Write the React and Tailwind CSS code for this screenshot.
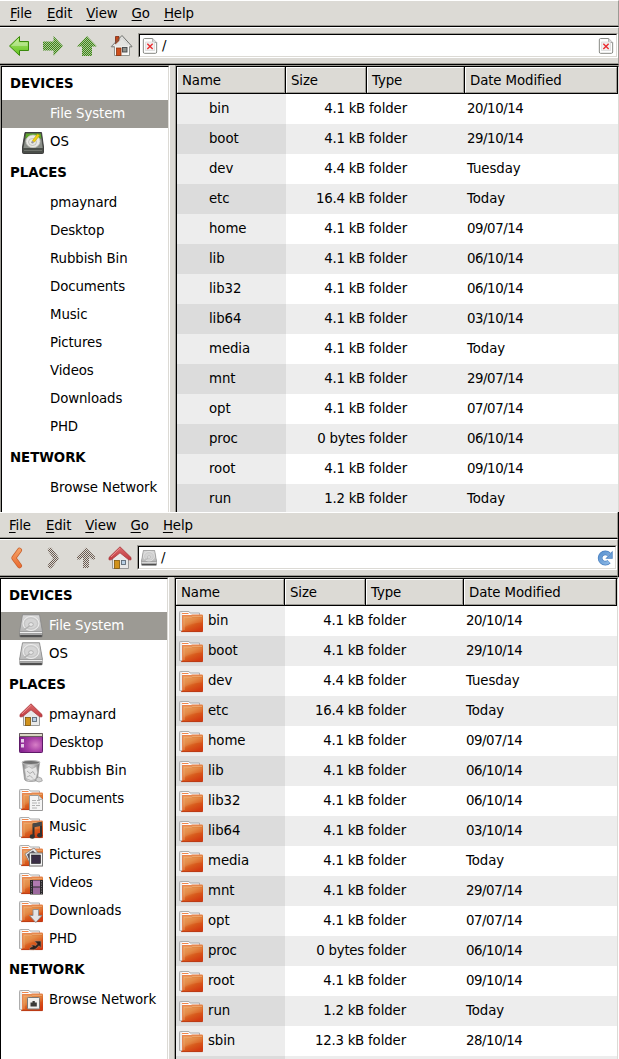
const ROWS = [
  ['bin', '4.1 kB', '20/10/14'], ['boot', '4.1 kB', '29/10/14'], ['dev', '4.4 kB', 'Tuesday'],
  ['etc', '16.4 kB', 'Today'], ['home', '4.1 kB', '09/07/14'], ['lib', '4.1 kB', '06/10/14'],
  ['lib32', '4.1 kB', '06/10/14'], ['lib64', '4.1 kB', '03/10/14'], ['media', '4.1 kB', 'Today'],
  ['mnt', '4.1 kB', '29/07/14'], ['opt', '4.1 kB', '07/07/14'], ['proc', '0 bytes', '06/10/14'],
  ['root', '4.1 kB', '09/10/14'], ['run', '1.2 kB', 'Today'], ['sbin', '12.3 kB', '28/10/14'],
];

function Defs() {
  return (
    <svg className="absolute size-0" aria-hidden="true">
      <defs>
        <linearGradient id="folder" x1="0" y1="0" x2=".6" y2="1">
          <stop offset="0" stopColor="#eda060" /><stop offset=".45" stopColor="#e08440" /><stop offset=".7" stopColor="#d85a1c" /><stop offset="1" stopColor="#d23c12" />
        </linearGradient>
        <linearGradient id="tab" x1="0" y1="0" x2="1" y2="0">
          <stop offset="0" stopColor="#d8d8d8" /><stop offset=".2" stopColor="#fff" /><stop offset="1" stopColor="#f2f2f2" />
        </linearGradient>
        <linearGradient id="drive" x1="0" y1="0" x2="0" y2="1">
          <stop offset="0" stopColor="#dadada" /><stop offset="1" stopColor="#b8b8b8" />
        </linearGradient>
        <linearGradient id="roof" x1="0" y1="0" x2="0" y2="1">
          <stop offset="0" stopColor="#db6a6c" /><stop offset="1" stopColor="#c23a40" />
        </linearGradient>
        <linearGradient id="green" x1="0" y1="0" x2="0" y2="1">
          <stop offset="0" stopColor="#b5e87a" /><stop offset="1" stopColor="#5fc11c" />
        </linearGradient>
        <linearGradient id="orange" x1="0" y1="0" x2="0" y2="24" gradientUnits="userSpaceOnUse">
          <stop offset="0" stopColor="#f7a96c" /><stop offset="1" stopColor="#e8642a" />
        </linearGradient>
        <radialGradient id="purple" cx=".7" cy=".6" r=".8">
          <stop offset="0" stopColor="#d77fc6" /><stop offset=".45" stopColor="#a83fa6" /><stop offset="1" stopColor="#7c1c8a" />
        </radialGradient>
        <linearGradient id="bin" x1="0" y1="0" x2="1" y2="0">
          <stop offset="0" stopColor="#7c7c7c" /><stop offset=".35" stopColor="#dcdcdc" /><stop offset=".65" stopColor="#c4c4c4" /><stop offset="1" stopColor="#7a7a7a" />
        </linearGradient>
        <linearGradient id="blue" x1="0" y1="0" x2="1" y2="1">
          <stop offset="0" stopColor="#5b93d0" /><stop offset="1" stopColor="#8ab6e4" />
        </linearGradient>
        <pattern id="ditherGreen" width="2" height="2" patternUnits="userSpaceOnUse">
          <rect width="2" height="2" fill="#a9c795" /><rect width="1" height="1" fill="#3f8418" /><rect x="1" y="1" width="1" height="1" fill="#3f8418" />
        </pattern>
        <pattern id="ditherGray" width="2" height="2" patternUnits="userSpaceOnUse">
          <rect width="1" height="1" fill="#6b5a50" /><rect x="1" y="1" width="1" height="1" fill="#6b5a50" />
        </pattern>
      </defs>
    </svg>
  );
}

function Svg({ children, size = 'size-6' }) {
  return <svg viewBox="0 0 24 24" className={`block shrink-0 ${size}`}>{children}</svg>;
}

function FolderBase() {
  return (
    <>
      <path d="M.5 21.500V3.300q0-.8.8-.8h8.700l1 1.500h9.500v17.500z" fill="url(#tab)" stroke="#adadad" />
      <path d="M3 4.500h6.500" stroke="#f0874c" />
      <path d="M2 5.500v16" stroke="#ededed" />
      <path d="M3 6H23.500q.5 0 .5.500V22q0 1-1 1H2q1-.3 1-1.500z" fill="url(#folder)" />
      <path d="M3.500 21.500V6.500H12l1-.5H23.500" fill="none" stroke="#e88450" />
      <path d="M5 21V8.300h7.500l1-.8H23" fill="none" stroke="#f0b684" strokeWidth=".6" />
      <path d="M5.500 9H23v4.500C16 14 9 15.500 5.500 18.500z" fill="#ffc880" opacity=".13" />
      <path d="M2 22.600h21.500" stroke="#b23a16" strokeWidth=".8" fill="none" />
    </>
  );
}

function Overlay({ kind }) {
  if (kind === 'documents') return (
    <>
      <path d="M10.500 8.500h9l4 4v11h-13z" fill="#f4f4f4" stroke="#999" />
      <path d="M19.500 8.500v4h4" fill="#ddd" stroke="#aaa" strokeWidth=".8" />
      <path d="M13 13.500h4m1 0h3M13 16h5m1 0h2M13 18.500h3m1 0h4M13 21h5" stroke="#aaa" strokeWidth=".9" />
    </>
  );
  if (kind === 'music') return (
    <>
      <path d="M14.500 21V9.500L22 8v12" fill="none" stroke="#303030" strokeWidth="2" />
      <path d="M14 8.500 23 7v3.800L14 12.500z" fill="#484848" />
      <ellipse cx="13.300" cy="21.500" rx="2.600" ry="2.200" fill="#333" /><ellipse cx="20.700" cy="20.300" rx="2.600" ry="2.200" fill="#333" />
    </>
  );
  if (kind === 'pictures') return (
    <>
      <path d="m6 11 9-6 5 6-9 9z" fill="#eee" stroke="#777" strokeWidth=".7" />
      <path d="m8 11.500 6-4 3 3-7 6z" fill="#55505c" />
      <rect x="10.500" y="10" width="13" height="13" fill="#f4f4f4" stroke="#777" />
      <rect x="12.500" y="12" width="9" height="8.500" fill="#3a2d45" stroke="#222" strokeWidth=".6" />
    </>
  );
  if (kind === 'videos') return (
    <>
      <rect x="11" y="9" width="13" height="14.500" fill="#2b282b" />
      <rect x="14" y="9.500" width="7" height="6" fill="#b07ab0" /><rect x="14" y="16.500" width="7" height="6.500" fill="#9c6a9e" />
      <path d="M12.500 10v13M22.500 10v13" stroke="#8a868a" strokeWidth=".8" strokeDasharray="1.200 1.200" />
    </>
  );
  if (kind === 'downloads') return (
    <path d="M14 10.500h5.500v6h3.500l-6.200 7-6.300-7H14z" fill="#e4e4e4" stroke="#8c8c8c" strokeWidth=".9" />
  );
  if (kind === 'link') return (
    <path d="M10.500 22.500c0-2 1-2.500 3-2.700l-1.500-1.500 3-.3 1.500.8 1.800-1.800L15.500 14H22v6.700l-2-2-3.200 3.300q-1.500 1.200-6.300.5z" fill="#2b211d" stroke="#c08a6c" strokeWidth=".6" />
  );
  if (kind === 'network') return (
    <>
      <rect x="8.500" y="9.500" width="12" height="11.500" rx=".8" fill="#f0f0ee" stroke="#777" />
      <path d="M11.500 18.500v-4h2v-1.500h2.300v1.500h2v4z" fill="#3a3a38" />
    </>
  );
  return null;
}

function Folder({ kind }) {
  return <Svg><FolderBase /><Overlay kind={kind} /></Svg>;
}

function Drive({ size }) {
  return (
    <Svg size={size}>
      <path d="M3.500.8h17l3 17.200v4q0 1.300-1.200 1.300H1.700Q.5 23.300.5 22v-4z" fill="#666" />
      <path d="M3.500.8h17l3 16.700H.5z" fill="url(#drive)" stroke="#8c8c8c" strokeWidth=".8" />
      <path d="M.8 17.800h22.400v1.500H.8z" fill="#f0f0f0" />
      <path d="M.8 19.300h22.400v1.700H.8z" fill="#a8a8a8" />
      <path d="M1.500 22h21" stroke="#4a4a4a" strokeWidth="1.500" />
      <ellipse cx="12" cy="9.500" rx="8" ry="7" fill="#d4d4d4" stroke="#ededed" />
      <ellipse cx="12" cy="9.500" rx="6.500" ry="5.600" fill="none" stroke="#bbb" strokeWidth=".7" />
      <ellipse cx="12" cy="10.500" rx="2.300" ry="1.900" fill="#e8e8e8" stroke="#a0a0a0" strokeWidth=".7" />
      <path d="m10.500 12-5 3.500" stroke="#b0b0b0" strokeWidth="1.300" />
    </Svg>
  );
}

function GreenDrive() {
  return (
    <Svg>
      <path d="M5 2.500h16.500l2 14.500v5.500q0 1-1 1H3.500q-1 0-1-1V17z" fill="#4a4e49" stroke="#333" strokeWidth=".9" />
      <path d="M6 3.500h14.700l.8 5H5.300z" fill="#5fa62c" />
      <path d="M5.300 8.500h16.200l1.200 9.500H3.500z" fill="#8a8e88" />
      <ellipse cx="13" cy="11.300" rx="7" ry="6.300" fill="#e9e9e5" stroke="#c5c5c0" strokeWidth=".7" />
      <ellipse cx="12.500" cy="12" rx="4" ry="3.500" fill="none" stroke="#b5b5b0" strokeWidth=".8" />
      <circle cx="12.500" cy="12.300" r="1.200" fill="#999" />
      <path d="m17.500 4-5 6.500 2 1.500 5-6.500z" fill="#f0d210" stroke="#c4a000" strokeWidth=".6" />
      <path d="M4 20.500h18" stroke="#6f736d" />
    </Svg>
  );
}

function HomeRed() {
  return (
    <Svg>
      <path d="M4.500 11 12 4l8.500 7v11.500h-16z" fill="#e9e9e9" stroke="#858585" strokeWidth=".8" />
      <path d="M12 .8 1 11.500v2.300h2.300L12 6.800l8.700 7H23v-2.300z" fill="url(#roof)" stroke="#a8383c" strokeWidth=".8" strokeLinejoin="round" />
      <path d="M12 2.200 3 11" stroke="#ef9a9a" strokeWidth=".8" />
      <rect x="6.500" y="14.500" width="5" height="8" fill="#d0921c" stroke="#80560a" strokeWidth=".8" />
      <rect x="13.500" y="14.500" width="4" height="4" fill="#b8cfe4" stroke="#5d6b78" strokeWidth=".9" />
    </Svg>
  );
}

function HomeTango() {
  return (
    <Svg>
      <path d="M5.500 11.500h15v10h-15z" fill="#f6f6f4" stroke="#888a85" strokeWidth=".9" />
      <path d="M13 1.500 22.800 11.500l-1 1.300H3.200l-1-1.300z" fill="#e6e6e4" />
      <path d="M13 5 20 12.300v2.200H6v-2.200z" fill="#f4f4f2" />
      <path d="M8 7.500v5M10 5.500v7M12 3.500v9M14 3.500v9M16 5.500v7M18 7.500v5" stroke="#c6c6c4" strokeWidth=".7" />
      <path d="M6.500 2.500H10v4l-3.500 3.300z" fill="#c64516" stroke="#7a2a10" strokeWidth=".8" />
      <path d="M2.300 12.500 13 1.500l10 11" fill="none" stroke="#60625e" strokeWidth=".9" />
      <path d="M2.300 12.800h3.200m15 0H23" stroke="#60625e" strokeWidth=".9" />
      <rect x="7.500" y="14" width="4.500" height="7.500" fill="#cf4f1c" stroke="#8a3410" strokeWidth=".8" />
      <rect x="13.500" y="13.500" width="4.500" height="4.500" fill="#8f928c" stroke="#44464a" strokeWidth=".9" />
    </Svg>
  );
}

function BrokenImage() {
  return (
    <Svg size="size-4">
      <path d="M3.800.8H16l6 6v14.200q0 2-2 2H3.800q-1.800 0-1.800-2V2.800Q2 .8 3.800.8z" fill="#fff" stroke="#888a85" strokeWidth="1.500" />
      <path d="M16 .8v6h6" fill="#ddd" stroke="#999" strokeWidth="1.300" />
      <rect x="5.500" y="6" width="13" height="13" fill="#f0f0f0" stroke="#d5d5d5" />
      <path d="m8 8.500 8 8m0-8-8 8" stroke="#ea2c30" strokeWidth="2" />
    </Svg>
  );
}

function DesktopIcon() {
  return (
    <Svg>
      <rect x=".5" y="2.500" width="23" height="19" rx=".8" fill="url(#purple)" stroke="#5e1a68" />
      <path d="M.5 2.500h23v3H.5z" fill="#d9d6c4" stroke="#55524a" strokeWidth=".8" />
      <rect x="2" y="8" width="3" height="3.500" fill="#e6cbe8" /><rect x="2" y="13" width="3" height="3.500" fill="#e6cbe8" />
    </Svg>
  );
}

function TrashIcon() {
  return (
    <Svg>
      <path d="M3.500 3.500h17L18.500 20q-.2 2.500-6.500 2.500T5.500 20z" fill="url(#bin)" stroke="#8f8f8f" strokeWidth=".7" />
      <path d="m5.500 10 4.500-2.500 3 2 4.500-2 1 6-1.500 6.500-5 1.500-5-2z" fill="#e6e6e6" stroke="#a5a5a5" strokeWidth=".6" />
      <path d="m8 12 3 2.500 3-2 2 3.500M8 18l3-1.500 3 3" fill="none" stroke="#a0a0a0" strokeWidth=".8" />
      <ellipse cx="12" cy="3.500" rx="8.800" ry="2" fill="#707070" stroke="#b8b8b8" strokeWidth="1.200" />
      <path d="m17 19.500 2.500-1.500 3 1.200.8 2.800-3.300 1-3-1z" fill="#d2d2d2" stroke="#888" strokeWidth=".6" />
    </Svg>
  );
}

function Reload() {
  return (
    <Svg size="size-4">
      <path d="M18 17.500a7.800 7.800 0 1 1 0-11" fill="none" stroke="#4a80c0" strokeWidth="7" />
      <path d="M23.500 1v12H12.500z" fill="#4a80c0" />
      <path d="M18 17.500a7.800 7.800 0 1 1 0-11" fill="none" stroke="url(#blue)" strokeWidth="5" />
      <path d="M22.300 4v8h-7z" fill="#6da0d8" />
    </Svg>
  );
}

const LEFT = 'M2.500 12 12.500 2.500V7.500H21.500V16.500H12.500V21.500z';
const RIGHT = 'M22 12 12.500 2V7.500H2V16.500H12.500V22z';
const UP = 'M12 2 22 12.500H17V22H7V12.500H2z';

function Toolbar({ human }) {
  return human ? (
    <>
      <Svg>
        <g fill="none" strokeLinecap="round" strokeLinejoin="round">
          <path d="M13.500 4.200 7.800 12l5.700 7.800" stroke="#c9622f" strokeWidth="5" />
          <path d="M13.500 4.200 7.800 12l5.700 7.800" stroke="url(#orange)" strokeWidth="3.500" />
        </g>
      </Svg>
      <Svg><path d="M10.300 4.200 16.200 12l-5.900 7.800" fill="none" stroke="url(#ditherGray)" strokeWidth="5" strokeLinecap="round" strokeLinejoin="round" /></Svg>
      <Svg><path d="M12 1.500 21 10.500v3h-3L15 11v11H9V11l-3 2.500H3v-3z" fill="url(#ditherGray)" /></Svg>
      <HomeRed />
    </>
  ) : (
    <>
      <Svg><path d={LEFT} fill="url(#green)" stroke="#3a8a0c" /><path d="M4 12 11.500 4.800v3.700h9V12z" fill="#fff" opacity=".3" /></Svg>
      <Svg><path d={RIGHT} fill="url(#ditherGreen)" /></Svg>
      <Svg><path d={UP} fill="url(#ditherGreen)" /></Svg>
      <HomeTango />
    </>
  );
}

const PLACES = [
  ['pmaynard', <HomeRed />], ['Desktop', <DesktopIcon />], ['Rubbish Bin', <TrashIcon />],
  ['Documents', <Folder kind="documents" />], ['Music', <Folder kind="music" />], ['Pictures', <Folder kind="pictures" />],
  ['Videos', <Folder kind="videos" />], ['Downloads', <Folder kind="downloads" />], ['PHD', <Folder kind="link" />],
];

function Heading({ children }) {
  return <div className="h-[33px] pl-2 leading-[34px] font-bold tracking-[-0.05px]">{children}</div>;
}

function Place({ label, icon, selected }) {
  return (
    <div className={`flex h-7 items-center pl-[18px] ${selected ? 'bg-[#9c9a94] text-white' : ''}`}>
      <div className="size-6 shrink-0">{icon}</div>
      <span className="ml-1.5 leading-7">{label}</span>
    </div>
  );
}

function HeaderCell({ children, width }) {
  return (
    <div className={`h-[27px] border-r border-b border-black ${width}`}>
      <div className="h-[26px] border border-t-white border-l-white border-r-[#9c9a94] border-b-[#9c9a94] bg-[#dcdad5] pl-1 leading-[26px]">{children}</div>
    </div>
  );
}

function MenuItem({ children, className = '' }) {
  return <span className={className}><u className="underline decoration-1 underline-offset-2">{children[0]}</u>{children.slice(1)}</span>;
}

function FileManager({ human, rows }) {
  return (
    <section className="flex h-full w-[620px] flex-col">
      <div className="flex h-[65px] border-r border-black">
        <div className="flex w-full flex-col">
          <nav className="flex h-[27px] gap-[14px] border-t border-r border-b border-t-white border-r-[#9c9a94] border-b-black bg-[#dcdad5] pl-[10px] leading-[26px] shadow-[inset_0_-1px_#9c9a94]">
            <MenuItem className="mr-px">File</MenuItem><MenuItem>Edit</MenuItem><MenuItem>View</MenuItem><MenuItem>Go</MenuItem><MenuItem>Help</MenuItem>
          </nav>
          <div className="flex h-[38px] border-t border-r border-b border-t-white border-r-[#9c9a94] border-b-black bg-[#dcdad5] pl-[7px] shadow-[inset_0_-1px_#9c9a94]">
            <div className="flex gap-[10px] pt-1.5"><Toolbar human={human} /></div>
            <div className="mt-[5px] ml-[5px] h-[25px] flex-1 border border-t-[#9c9a94] border-l-[#9c9a94] border-r-white border-b-white">
              <div className="flex h-[23px] items-center border border-t-black border-l-black border-r-[#dcdad5] border-b-[#dcdad5] bg-white pr-0.5 pl-0.5">
                {human ? <Drive size="size-4" /> : <BrokenImage />}
                <span className="ml-1 flex-1 leading-[22px]">/</span>
                {human ? <Reload /> : <BrokenImage />}
              </div>
            </div>
          </div>
        </div>
      </div>
      <div className="flex min-h-0 flex-1">
        <aside className="w-[170px] overflow-hidden border-t border-r border-l border-t-[#9c9a94] border-r-white border-l-[#9c9a94]">
          <div className="h-full border-t border-r border-l border-t-black border-r-[#dcdad5] border-l-black bg-white">
            <Heading>DEVICES</Heading>
            <Place label="File System" icon={human && <Drive />} selected />
            <Place label="OS" icon={human ? <Drive /> : <GreenDrive />} />
            <Heading>PLACES</Heading>
            {PLACES.map(([label, icon]) => <Place key={label} label={label} icon={human && icon} />)}
            <Heading>NETWORK</Heading>
            <Place label="Browse Network" icon={human && <Folder kind="network" />} />
          </div>
        </aside>
        <div className="w-[5px] bg-[#dcdad5]" />
        <main className="min-w-0 flex-1 overflow-hidden border-t border-r border-l border-t-[#9c9a94] border-r-white border-l-[#9c9a94]">
          <div className="h-full border-t border-r border-l border-t-black border-r-[#dcdad5] border-l-black bg-white">
            <div className="flex">
              <HeaderCell width="w-[109px]">Name</HeaderCell>
              <HeaderCell width="w-[81px]">Size</HeaderCell>
              <HeaderCell width="w-[98px]">Type</HeaderCell>
              <HeaderCell width="w-[153px]">Date Modified</HeaderCell>
            </div>
            {rows.map(([name, size, date], i) => (
              <div key={name} className={`flex h-[30px] leading-[30px] ${i % 2 ? 'bg-[#ededed]' : 'bg-white'}`}>
                <div className={`flex w-[109px] pl-[3px] ${i % 2 ? 'bg-[#dcdcdc]' : 'bg-[#ededed]'}`}>
                  <div className="mt-[3px] size-6 shrink-0">{human && <Folder />}</div>
                  <span className="ml-[5px]">{name}</span>
                </div>
                <span className="w-[79px] text-right tracking-[-0.25px]">{size}</span>
                <span className="ml-1 w-[98px]">folder</span>
                <span className={date.includes('/') ? 'tracking-[-0.45px]' : ''}>{date}</span>
              </div>
            ))}
            <div className="h-[3px] bg-[#ededed]"><div className="h-full w-[109px] bg-[#dcdcdc]" /></div>
          </div>
        </main>
      </div>
    </section>
  );
}

export default function App() {
  return (
    <div className="flex h-[1059px] w-[619px] flex-col overflow-hidden bg-white font-['DejaVu_Sans',sans-serif] text-[13.333px] tracking-[-0.1px] whitespace-nowrap text-black">
      <Defs />
      <div className="h-[512px] shrink-0 overflow-hidden"><FileManager rows={ROWS.slice(0, 14)} /></div>
      <div className="-ml-px h-[547px] w-[620px] shrink-0 overflow-hidden"><FileManager human rows={ROWS} /></div>
    </div>
  );
}
